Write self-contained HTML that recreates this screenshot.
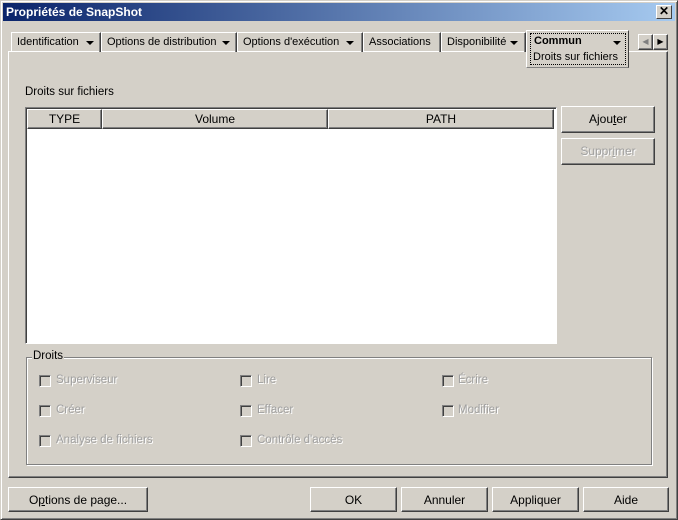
<!DOCTYPE html><html><head><style>
*{box-sizing:border-box;margin:0;padding:0}
body{width:678px;height:520px;background:#d4d0c8;font:11px "Liberation Sans",sans-serif;color:#000;position:relative;overflow:hidden}
.a{position:absolute}
.win{left:0;top:0;width:678px;height:520px;border:1px solid;border-color:#d4d0c8 #404040 #404040 #d4d0c8;box-shadow:inset 1px 1px #fff,inset -1px -1px #808080}
.title{left:3px;top:3px;width:672px;height:18px;background:linear-gradient(90deg,#0a246a,#a6caf0);color:#fff;font-weight:bold;font-size:12px;line-height:18px;padding-left:3px}
.x{left:656px;top:5px;width:16px;height:14px;background:#d4d0c8;border:1px solid;border-color:#fff #404040 #404040 #fff;font-size:12px;line-height:11px;text-align:center;font-weight:bold}
.r{border:1px solid;border-color:#fff #404040 #404040 #fff;box-shadow:inset -1px -1px #808080}
.s{border:1px solid;border-color:#808080 #fff #fff #808080;box-shadow:inset 1px 1px #404040}
.tab{top:32px;height:20px;border:1px solid;border-color:#fff #404040 transparent #fff;border-bottom:none;box-shadow:inset -1px 0 #808080;line-height:18px;padding-left:5px;white-space:nowrap}
.tri{position:absolute;width:0;height:0;border-left:4px solid transparent;border-right:4px solid transparent;border-top:4px solid #000;top:8px}
.btn{text-align:center;line-height:24px;font-size:12px}
.hd{top:109px;height:20px;text-align:center;line-height:18px;font-size:12px}
.cb{width:12px;height:12px}
.dis{color:#a0a0a0;text-shadow:1px 1px #fff}
.lbl{font-size:11.5px}
</style></head><body>
<div class="a win"></div>
<div class="a title">Propriétés de SnapShot</div>
<div class="a x">✕</div>
<div class="a r" style="left:8px;top:51px;width:660px;height:427px;border-top-color:#fff"></div>
<div class="a tab" style="left:11px;width:90px">Identification<span class="tri" style="left:74px"></span></div>
<div class="a tab" style="left:101px;width:136px">Options de distribution<span class="tri" style="left:120px"></span></div>
<div class="a tab" style="left:237px;width:126px">Options d'exécution<span class="tri" style="left:108px"></span></div>
<div class="a tab" style="left:363px;width:78px">Associations</div>
<div class="a tab" style="left:441px;width:85px">Disponibilité<span class="tri" style="left:68px"></span></div>
<div class="a" style="left:526px;top:30px;width:103px;height:38px;background:#d4d0c8;border:1px solid;border-color:#fff #404040 #808080 #fff"></div>
<div class="a" style="left:530px;top:33px;width:96px;height:32px;border:1px dotted #000"></div>
<div class="a" style="left:534px;top:35px;font-weight:bold">Commun</div>
<div class="a tri" style="left:613px;top:41px"></div>
<div class="a" style="left:533px;top:51px">Droits sur fichiers</div>
<div class="a r" style="left:638px;top:34px;width:15px;height:16px;font-size:8px;color:#808080;text-align:center;line-height:13px">◀</div>
<div class="a r" style="left:653px;top:34px;width:15px;height:16px;font-size:8px;text-align:center;line-height:13px">▶</div>
<div class="a lbl" style="left:25px;top:86px">Droits sur fichiers</div>
<div class="a s" style="left:25px;top:107px;width:532px;height:237px;background:#fff"></div>
<div class="a r hd" style="left:27px;width:75px;background:#d4d0c8">TYPE</div>
<div class="a r hd" style="left:102px;width:226px;background:#d4d0c8">Volume</div>
<div class="a r hd" style="left:328px;width:226px;background:#d4d0c8">PATH</div>
<div class="a r btn" style="left:561px;top:106px;width:94px;height:27px">Ajou<u>t</u>er</div>
<div class="a r btn dis" style="left:561px;top:138px;width:94px;height:27px">Suppr<u>i</u>mer</div>
<div class="a" style="left:26px;top:357px;width:626px;height:108px;border:1px solid #808080;box-shadow:1px 1px #fff,inset 1px 1px #fff"></div>
<div class="a lbl" style="left:32px;top:350px;background:#d4d0c8;padding:0 1px">Droits</div>
<div class="a s cb" style="left:39px;top:375px;background:#d4d0c8"></div><div class="a dis lbl" style="left:56px;top:374px">Superviseur</div>
<div class="a s cb" style="left:240px;top:375px;background:#d4d0c8"></div><div class="a dis lbl" style="left:257px;top:374px">Lire</div>
<div class="a s cb" style="left:442px;top:375px;background:#d4d0c8"></div><div class="a dis lbl" style="left:458px;top:374px">Écrire</div>
<div class="a s cb" style="left:39px;top:405px;background:#d4d0c8"></div><div class="a dis lbl" style="left:56px;top:404px">Créer</div>
<div class="a s cb" style="left:240px;top:405px;background:#d4d0c8"></div><div class="a dis lbl" style="left:257px;top:404px">Effacer</div>
<div class="a s cb" style="left:442px;top:405px;background:#d4d0c8"></div><div class="a dis lbl" style="left:458px;top:404px">Modifier</div>
<div class="a s cb" style="left:39px;top:435px;background:#d4d0c8"></div><div class="a dis lbl" style="left:56px;top:434px">Analyse de fichiers</div>
<div class="a s cb" style="left:240px;top:435px;background:#d4d0c8"></div><div class="a dis lbl" style="left:257px;top:434px">Contrôle d'accès</div>
<div class="a r btn" style="left:8px;top:487px;width:140px;height:25px">O<u>p</u>tions de page...</div>
<div class="a r btn" style="left:310px;top:487px;width:87px;height:25px">OK</div>
<div class="a r btn" style="left:401px;top:487px;width:87px;height:25px">Annuler</div>
<div class="a r btn" style="left:492px;top:487px;width:87px;height:25px">Appliquer</div>
<div class="a r btn" style="left:583px;top:487px;width:86px;height:25px">Aide</div>
</body></html>
